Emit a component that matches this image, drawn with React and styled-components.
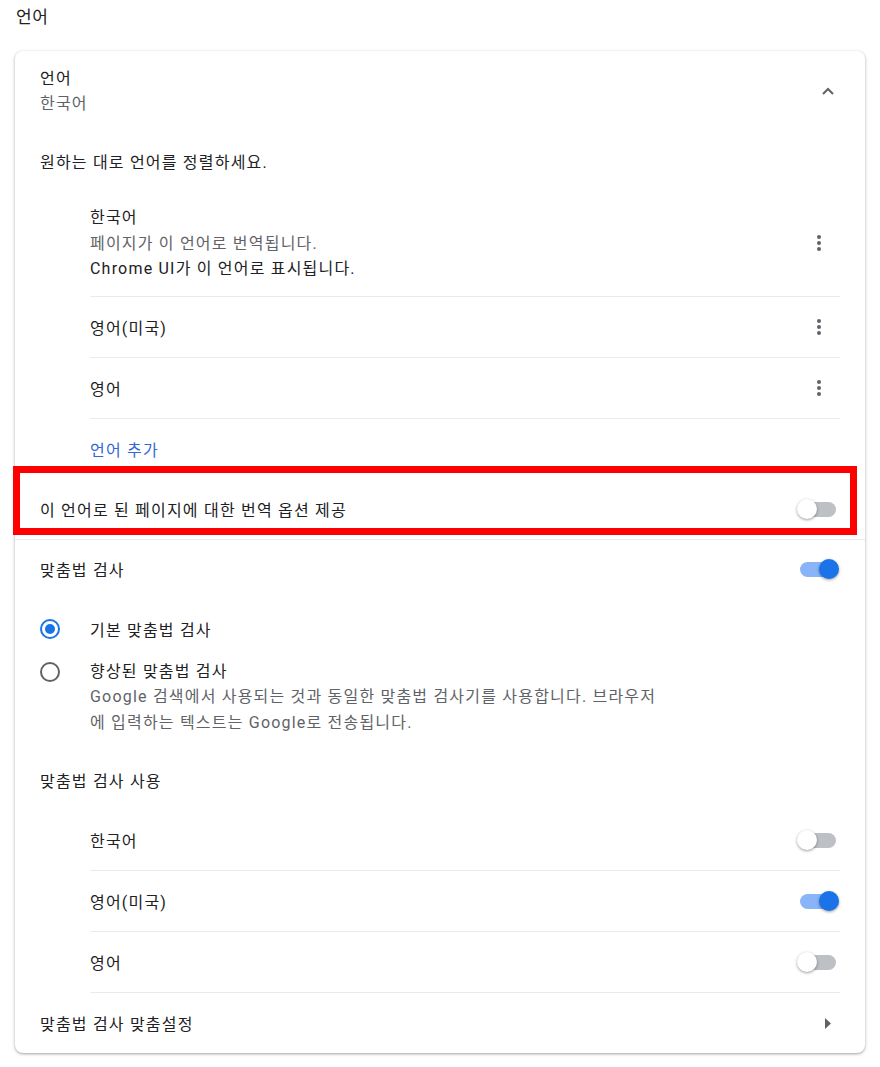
import React from 'react';
import styled, { createGlobalStyle } from 'styled-components';

const GlobalStyle = createGlobalStyle`
  body {
    margin: 0;
    background: #fff;
    color: #202124;
    font-family: Roboto, "Noto Sans CJK KR", sans-serif;
    font-size: 16px;
    letter-spacing: 1.2px;
  }
`;

const Page = styled.div`
  padding: 0 15px 12px;
`;

const PageTitle = styled.h2`
  margin: 0 0 21px 1px;
  padding-top: 5px;
  font-size: 17px;
  font-weight: 400;
  line-height: 25px;
  letter-spacing: 0.6px;
`;

const Card = styled.div`
  background: #fff;
  border-radius: 8px;
  box-shadow: 0 1px 2px 0 rgba(60, 64, 67, .3), 0 1px 3px 1px rgba(60, 64, 67, .15);
`;

const Row = styled.div`
  position: relative;
  display: flex;
  align-items: center;
  justify-content: space-between;
  min-height: ${(p) => p.$height || 60}px;
  padding: 0 25px;
  box-sizing: border-box;
  border-top: ${(p) => (p.$divider ? '1px solid #e8eaed' : 'none')};
`;

const Lines = styled.div`
  display: flex;
  flex-direction: column;
  line-height: 25.5px;
`;

const Primary = styled.span`
  color: #202124;
`;

const Secondary = styled.span`
  color: #5f6368;
`;

const Link = styled.span`
  color: #3367d6;
  cursor: pointer;
`;

const List = styled.div`
  margin: 0 25px 0 75px;
`;

const ListItem = styled.div`
  display: flex;
  align-items: center;
  justify-content: space-between;
  min-height: 60px;
  padding: ${(p) => (p.$tall ? '14px 0' : '0')};
  border-bottom: 1px solid #e8eaed;
`;

const LinkRow = styled.div`
  display: flex;
  align-items: center;
  min-height: 60px;
  margin-left: 75px;
`;

const IconButton = styled.div`
  display: flex;
  align-items: center;
  justify-content: center;
  width: ${(p) => p.$size || 25}px;
  height: ${(p) => p.$size || 25}px;
  flex-shrink: 0;
  cursor: pointer;
`;

const RedOutline = styled.div`
  position: absolute;
  top: -13px;
  left: -2px;
  right: 8px;
  bottom: 4px;
  border: 7px solid #ff0000;
  pointer-events: none;
`;

const ToggleBox = styled.div`
  position: relative;
  width: 43px;
  height: 20px;
  flex-shrink: 0;
  cursor: pointer;
`;

const ToggleBar = styled.div`
  position: absolute;
  top: 3px;
  left: 3px;
  width: 36px;
  height: 15px;
  border-radius: 8px;
  background: ${(p) => (p.$on ? '#8ab4f8' : '#bdc1c6')};
`;

const ToggleKnob = styled.div`
  position: absolute;
  top: 0;
  left: ${(p) => (p.$on ? 22 : 0)}px;
  width: 20px;
  height: 20px;
  border-radius: 50%;
  background: ${(p) => (p.$on ? '#1a73e8' : '#fff')};
  box-shadow: 0 1px 3px 0 rgba(0, 0, 0, .4);
`;

const RadioRow = styled.div`
  display: flex;
  align-items: ${(p) => (p.$top ? 'flex-start' : 'center')};
  gap: 30px;
  min-height: ${(p) => (p.$top ? 0 : 60)}px;
  padding: ${(p) => (p.$top ? '0 25px 15px' : '0 25px')};
`;

const RadioCircle = styled.div`
  width: 20px;
  height: 20px;
  box-sizing: border-box;
  border-radius: 50%;
  border: 2.5px solid ${(p) => (p.$checked ? '#1a73e8' : '#5f6368')};
  display: flex;
  align-items: center;
  justify-content: center;
  flex-shrink: 0;
  margin-top: ${(p) => (p.$top ? 3 : 0)}px;

  &::after {
    content: '';
    display: ${(p) => (p.$checked ? 'block' : 'none')};
    width: 10px;
    height: 10px;
    border-radius: 50%;
    background: #1a73e8;
  }
`;

const Toggle = ({ on }) => (
  <ToggleBox>
    <ToggleBar $on={on} />
    <ToggleKnob $on={on} />
  </ToggleBox>
);

const Kebab = () => (
  <IconButton $size={45} style={{ marginRight: -1 }}>
    <svg width="4" height="16" viewBox="0 0 4 16">
      <circle cx="2" cy="2" r="2" fill="#5f6368" />
      <circle cx="2" cy="8" r="2" fill="#5f6368" />
      <circle cx="2" cy="14" r="2" fill="#5f6368" />
    </svg>
  </IconButton>
);

const ChevronUp = () => (
  <IconButton>
    <svg width="12" height="8" viewBox="0 0 12 8">
      <path d="M1 7 L6 2 L11 7" fill="none" stroke="#5f6368" strokeWidth="2" />
    </svg>
  </IconButton>
);

const ArrowRight = () => (
  <IconButton>
    <svg width="6" height="11" viewBox="0 0 6 11">
      <path d="M0 0 L6 5.5 L0 11 Z" fill="#5f6368" />
    </svg>
  </IconButton>
);

const languages = [
  { name: '영어(미국)' },
  { name: '영어' },
];

const spellLanguages = [
  { name: '한국어', on: false },
  { name: '영어(미국)', on: true },
  { name: '영어', on: false },
];

const App = () => (
  <>
    <GlobalStyle />
    <Page>
      <PageTitle>언어</PageTitle>
      <Card>
        <Row $height={80}>
          <Lines>
            <Primary>언어</Primary>
            <Secondary>한국어</Secondary>
          </Lines>
          <ChevronUp />
        </Row>
        <Row>
          <Primary>원하는 대로 언어를 정렬하세요.</Primary>
        </Row>
        <List>
          <ListItem $tall>
            <Lines>
              <Primary>한국어</Primary>
              <Secondary>페이지가 이 언어로 번역됩니다.</Secondary>
              <Primary>Chrome UI가 이 언어로 표시됩니다.</Primary>
            </Lines>
            <Kebab />
          </ListItem>
          {languages.map((lang) => (
            <ListItem key={lang.name}>
              <Primary>{lang.name}</Primary>
              <Kebab />
            </ListItem>
          ))}
        </List>
        <LinkRow>
          <Link>언어 추가</Link>
        </LinkRow>
        <Row>
          <Primary>이 언어로 된 페이지에 대한 번역 옵션 제공</Primary>
          <Toggle on={false} />
          <RedOutline />
        </Row>
        <Row $divider>
          <Primary>맞춤법 검사</Primary>
          <Toggle on />
        </Row>
        <RadioRow>
          <RadioCircle $checked />
          <Primary>기본 맞춤법 검사</Primary>
        </RadioRow>
        <RadioRow $top>
          <RadioCircle $top />
          <Lines>
            <Primary>향상된 맞춤법 검사</Primary>
            <Secondary>
              Google 검색에서 사용되는 것과 동일한 맞춤법 검사기를 사용합니다. 브라우저
              <br />
              에 입력하는 텍스트는 Google로 전송됩니다.
            </Secondary>
          </Lines>
        </RadioRow>
        <Row>
          <Primary>맞춤법 검사 사용</Primary>
        </Row>
        <List>
          {spellLanguages.map((lang) => (
            <ListItem key={lang.name}>
              <Primary>{lang.name}</Primary>
              <Toggle on={lang.on} />
            </ListItem>
          ))}
        </List>
        <Row>
          <Primary>맞춤법 검사 맞춤설정</Primary>
          <ArrowRight />
        </Row>
      </Card>
    </Page>
  </>
);

export default App;
